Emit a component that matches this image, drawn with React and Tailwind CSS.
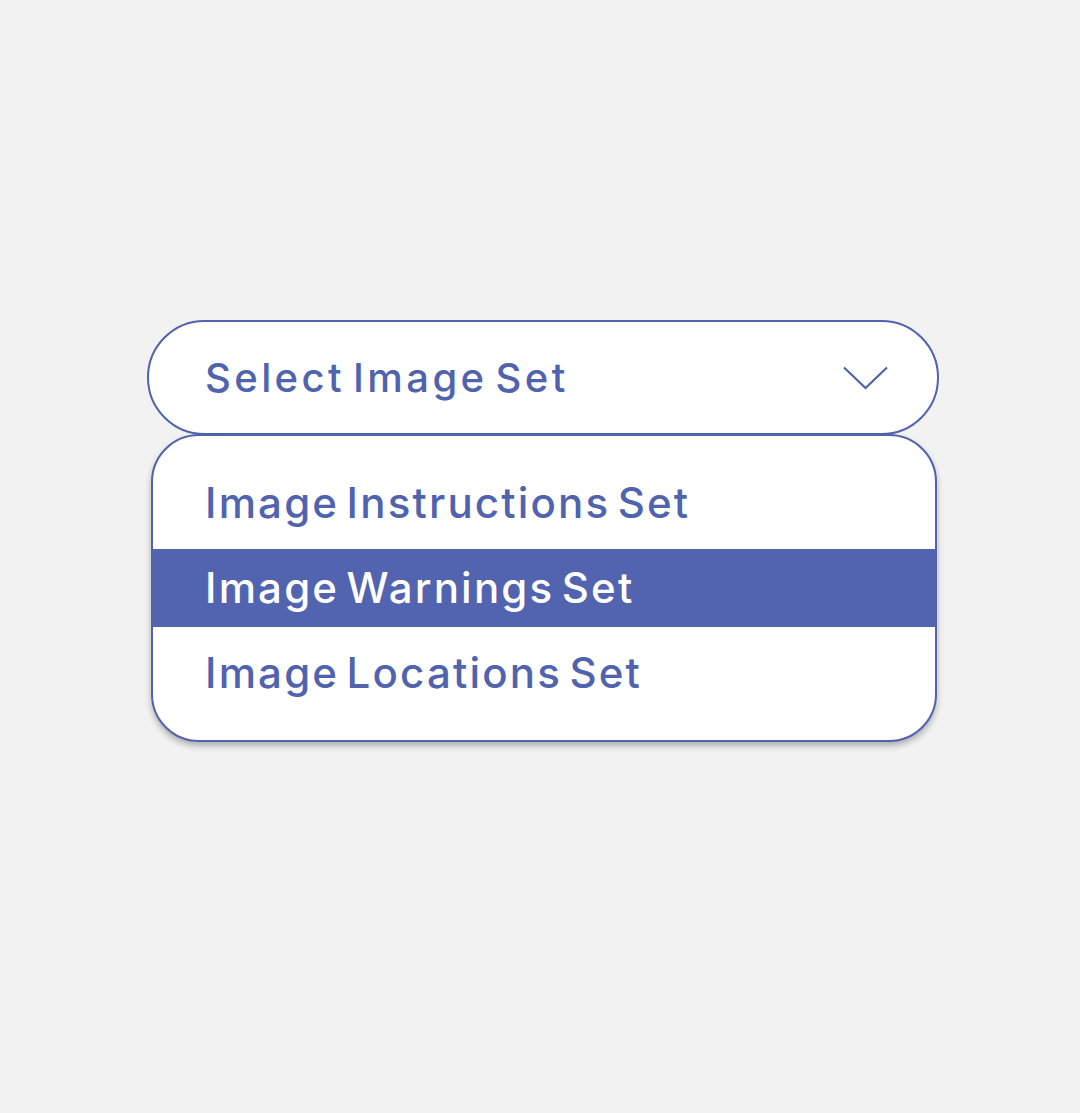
import { useState } from "react";

const options = [
  "Image Instructions Set",
  "Image Warnings Set",
  "Image Locations Set",
];

function Chevron() {
  return (
    <svg width="45" height="24" viewBox="0 0 45 24" fill="none">
      <path
        d="M1 1.5 L22.5 22 L44 1.5"
        stroke="#5063ae"
        strokeWidth="2.2"
        strokeLinecap="butt"
        strokeLinejoin="miter"
      />
    </svg>
  );
}

export default function App() {
  const [selected, setSelected] = useState(1);

  return (
    <div
      className="min-h-[1113px] w-full bg-[#f2f2f2] pt-[320px] pl-[147px]"
      style={{ fontFamily: "Inter, 'Liberation Sans', sans-serif" }}
    >
      <div className="w-[792px]">
        {/* select trigger */}
        <button className="flex h-[115px] w-full items-center justify-between rounded-full border-2 border-[#5063ae] bg-white pl-[56px] pr-[49px] text-left">
          <span className="text-[40px] font-medium leading-none text-[#5063ae] tracking-[0.085em] [word-spacing:-6px]">
            Select Image Set
          </span>
          <Chevron />
        </button>

        {/* options list */}
        <div className="-mt-[1px] ml-[4px] w-[786px] rounded-[48px] border-2 border-[#5063ae] bg-white py-[28px] shadow-[0_4px_6px_rgba(0,0,0,0.28)]">
          <ul className="flex flex-col gap-[7px]">
            {options.map((o, i) => (
              <li
                key={o}
                onClick={() => setSelected(i)}
                className={
                  "flex h-[78px] cursor-pointer items-center pl-[52px] text-[42px] font-medium leading-none tracking-[0.052em] [word-spacing:-6px] " +
                  (i === selected
                    ? "bg-[#5264af] text-white"
                    : "text-[#5063ae]")
                }
              >
                {o}
              </li>
            ))}
          </ul>
        </div>
      </div>
    </div>
  );
}
